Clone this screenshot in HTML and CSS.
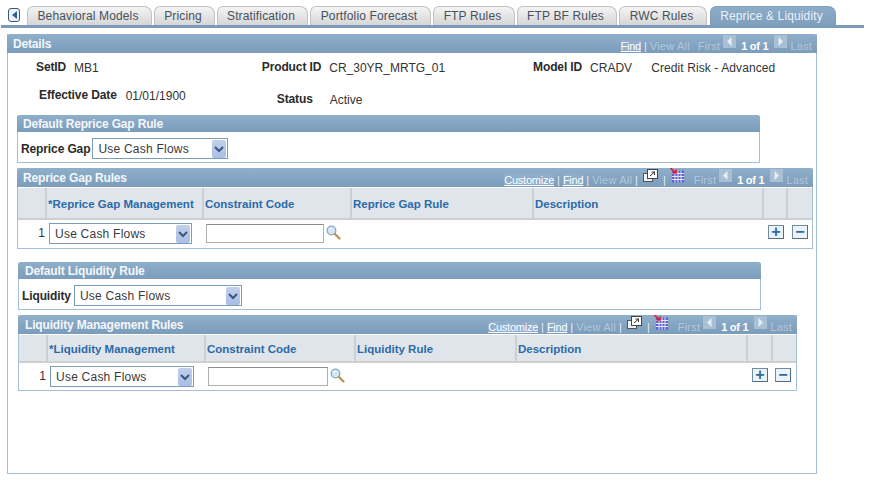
FILE: index.html
```html
<!DOCTYPE html>
<html>
<head>
	<meta charset="UTF-8">
	<title>Reprice &amp; Liquidity</title>
	<link rel="stylesheet" href="styles.css">
</head>
<body>
	<svg class="defs" width="0" height="0">
		<symbol id="zoom" viewBox="0 0 15 15">
			<circle cx="5.500" cy="5.500" r="4.300" fill="#d6e6f5" stroke="#86a8c8" stroke-width="1.300"/>
			<path d="M3.500 4.500c.6-1 1.400-1.500 2.500-1.500" fill="none" stroke="#fff" stroke-width="1.200"/>
			<path d="M9 9l4.500 4.500" stroke="#b8924f" stroke-width="2.200" stroke-linecap="round"/>
		</symbol>
		<symbol id="arrow" viewBox="0 0 14 18">
			<path d="M3 7l4 4 4-4" fill="none" stroke="#3b5680" stroke-width="2"/>
		</symbol>
		<symbol id="popup" viewBox="0 0 15 13">
			<rect x=".5" y="4.500" width="9" height="8" fill="#eef3f7" stroke="#555"/>
			<rect x="4.500" y=".5" width="10" height="9" fill="#fff" stroke="#444"/>
			<path d="M7 7l4.500-4M8.500 3h3v3" fill="none" stroke="#333"/>
		</symbol>
		<symbol id="sheet" viewBox="0 0 14 15">
			<rect x="1.500" y="2.500" width="12" height="12" fill="#5f5fd0"/>
			<path d="M1.500 5.500h12M1.500 8.500h12M1.500 11.500h12M4.500 2.500v12M7.500 2.500v12M10.500 2.500v12" stroke="#e4e6fa"/>
			<path d="M0 0l5.500 5M2 5h3.500V1.500" fill="none" stroke="#d8232a" stroke-width="1.600"/>
		</symbol>
		<symbol id="prev" viewBox="0 0 13 13">
			<rect width="13" height="13" fill="#a9c0d4"/>
			<path d="M8.500 2v9L4 6.500z" fill="#e6eef5"/>
		</symbol>
		<symbol id="next" viewBox="0 0 13 13">
			<rect width="13" height="13" fill="#a9c0d4"/>
			<path d="M4.500 2v9L9 6.500z" fill="#e6eef5"/>
		</symbol>
	</svg>

	<div class="tabs">
		<a class="back"><i></i></a>
		<a class="tab w1">Behavioral Models</a>
		<a class="tab w2">Pricing</a>
		<a class="tab w3">Stratification</a>
		<a class="tab w4">Portfolio Forecast</a>
		<a class="tab w5">FTP Rules</a>
		<a class="tab w6">FTP BF Rules</a>
		<a class="tab w7">RWC Rules</a>
		<a class="tab active">Reprice &amp; Liquidity</a>
	</div>
	<div class="tabbar"></div>

	<div class="details">
		<div class="title">
			<span>Details</span>
			<div class="nav">
				<a>Find</a><b class="sep">|</b><em>View All</em><em class="first">First</em>
				<svg class="step"><use href="#prev"/></svg><strong>1 of 1</strong><svg class="step"><use href="#next"/></svg><em>Last</em>
			</div>
		</div>

		<div class="fields row1">
			<label>SetID</label><span class="val mb1">MB1</span>
			<label>Product ID</label><span class="val cr">CR_30YR_MRTG_01</span>
			<label>Model ID</label><span class="val cradv">CRADV</span><span class="val descr">Credit Risk - Advanced</span>
		</div>
		<div class="fields row2">
			<label>Effective Date</label><span class="val date">01/01/1900</span>
			<label class="status">Status</label><span class="val active-val">Active</span>
		</div>

		<div class="box box-gap">
			<div class="title small">Default Reprice Gap Rule</div>
			<div class="pick">
				<label>Reprice Gap</label>
				<div class="select sel-gap">Use Cash Flows<span class="drop"><svg><use href="#arrow"/></svg></span></div>
			</div>
		</div>

		<div class="grid grid-gap">
			<div class="title small">
				<span>Reprice Gap Rules</span>
				<div class="nav">
					<a>Customize</a><b class="sep">|</b><a>Find</a><b class="sep">|</b><em>View All</em><b class="sep">|</b>
					<svg class="ico"><use href="#popup"/></svg><b class="sep">|</b><svg class="ico sheet"><use href="#sheet"/></svg><em class="first">First</em>
					<svg class="step"><use href="#prev"/></svg><strong>1 of 1</strong><svg class="step"><use href="#next"/></svg><em>Last</em>
				</div>
			</div>
			<div class="head">
				<div class="c0"></div>
				<div class="c1">*Reprice Gap Management</div>
				<div class="c2">Constraint Code</div>
				<div class="c3">Reprice Gap Rule</div>
				<div class="c4">Description</div>
				<div class="c5"></div>
				<div class="c6"></div>
			</div>
			<div class="line">
				<div class="c0 num">1</div>
				<div class="c1"><div class="select sel-row">Use Cash Flows<span class="drop"><svg><use href="#arrow"/></svg></span></div></div>
				<div class="c2 code"><div class="input"></div><svg class="lens"><use href="#zoom"/></svg></div>
				<div class="c3"></div>
				<div class="c4"></div>
				<div class="c5"><span class="btn">+</span></div>
				<div class="c6"><span class="btn">&minus;</span></div>
			</div>
		</div>

		<div class="box box-liq">
			<div class="title small">Default Liquidity Rule</div>
			<div class="pick">
				<label>Liquidity</label>
				<div class="select sel-liq">Use Cash Flows<span class="drop"><svg><use href="#arrow"/></svg></span></div>
			</div>
		</div>

		<div class="grid grid-liq">
			<div class="title small">
				<span>Liquidity Management Rules</span>
				<div class="nav">
					<a>Customize</a><b class="sep">|</b><a>Find</a><b class="sep">|</b><em>View All</em><b class="sep">|</b>
					<svg class="ico"><use href="#popup"/></svg><b class="sep">|</b><svg class="ico sheet"><use href="#sheet"/></svg><em class="first">First</em>
					<svg class="step"><use href="#prev"/></svg><strong>1 of 1</strong><svg class="step"><use href="#next"/></svg><em>Last</em>
				</div>
			</div>
			<div class="head">
				<div class="c0"></div>
				<div class="c1">*Liquidity Management</div>
				<div class="c2">Constraint Code</div>
				<div class="c3">Liquidity Rule</div>
				<div class="c4">Description</div>
				<div class="c5"></div>
				<div class="c6"></div>
			</div>
			<div class="line">
				<div class="c0 num">1</div>
				<div class="c1"><div class="select sel-row2">Use Cash Flows<span class="drop"><svg><use href="#arrow"/></svg></span></div></div>
				<div class="c2 code"><div class="input wide"></div><svg class="lens"><use href="#zoom"/></svg></div>
				<div class="c3"></div>
				<div class="c4"></div>
				<div class="c5"><span class="btn">+</span></div>
				<div class="c6"><span class="btn">&minus;</span></div>
			</div>
		</div>
	</div>
</body>
</html>
```

FILE: styles.css
```css
* {
    box-sizing: border-box;
}
html, body {
    margin: 0;
    background: #fff;
}
body {
    width: 875px;
    height: 490px;
    overflow: hidden;
    font-family: "Liberation Sans", Arial, sans-serif;
    font-size: 12px;
    color: #333;
}
.defs {
    display: block;
    height: 0;
}

/* tabs */
.tabs {
    display: flex;
    align-items: flex-end;
    height: 25px;
    padding-left: 8px;
    gap: 2px;
}
.back {
    width: 12px;
    height: 14px;
    margin: 0 5px 3px 0;
    border: 1px solid #40566c;
    border-radius: 3px;
    background: #eef3f8;
    display: flex;
    align-items: center;
    justify-content: center;
}
.back i {
    border: 4px solid transparent;
    border-right: 5px solid #2f5f9f;
    border-left: 0;
}
.tab {
    height: 19px;
    padding-right: 3px;
    line-height: 18px;
    text-align: center;
    border: 1px solid #c2c2c2;
    border-bottom: 0;
    border-radius: 6px 8px 0 0;
    background: linear-gradient(#f4f4f4, #d6d6d6);
    color: #46525e;
    letter-spacing: .14px;
}
.w1 { width: 125px; }
.w2 { width: 61px; }
.w3 { width: 91px; }
.w4 { width: 121px; }
.w5 { width: 82px; }
.w6 { width: 100px; }
.w7 { width: 88px; }
.tab.active {
    width: 126px;
    margin-left: 1px;
    border-color: #7f9fbd;
    background: linear-gradient(#8cacc8, #7f9fbd);
    color: #eaf1f7;
}
.tabbar {
    height: 3px;
    margin: 0 11px 6px 1px;
    background: #7a9bba;
}

/* panels */
.details {
    width: 810px;
    height: 440px;
    margin-left: 7px;
    border: 1px solid #a3bfda;
    border-top: 0;
}
.title {
    display: flex;
    justify-content: space-between;
    align-items: center;
    height: 19px;
    margin: 0 -1px;
    padding: 0 5px 0 6px;
    border-radius: 3px 3px 0 0;
    background: linear-gradient(#8fafca, #7b9cbb);
    color: #f4f7fa;
    font-weight: bold;
    letter-spacing: -.17px;
}
.title.small {
    height: 17px;
}
.grid .title.small {
    height: 19px;
}
.nav {
    display: flex;
    align-items: center;
    gap: 3px;
    padding-top: 4px;
    font-size: 11px;
    font-weight: normal;
    letter-spacing: 0;
    color: #fff;
}
.nav a {
    letter-spacing: -.25px;
    text-decoration: underline;
    background: #90aecb;
}
.nav em {
    font-style: normal;
    letter-spacing: .2px;
    color: #b3c7d9;
}
.nav strong {
    margin: 0 3px 0 2px;
    letter-spacing: -.25px;
    color: #fff;
}
.nav .first {
    margin-left: 5px;
}
.sep {
    font-weight: normal;
    color: #e8eef4;
}
.step {
    width: 13px;
    height: 13px;
    margin-top: -8px;
}
.ico {
    width: 15px;
    height: 13px;
    margin: -8px 2px 0;
}
.ico.sheet {
    height: 15px;
    margin: -9px 1px 0;
}

/* details fields */
.fields {
    display: flex;
    align-items: flex-start;
}
.fields label {
    font-weight: bold;
    letter-spacing: -.12px;
    color: #2b2b2b;
}
.val {
    margin-top: 1px;
    color: #333;
}
.row1 {
    height: 24px;
    padding: 7px 0 0 28px;
}
.mb1 { margin: 1px 163px 0 8px; }
.cr { margin: 1px 88px 0 8px; }
.cradv { margin: 1px 19px 0 8px; }
.descr { letter-spacing: .1px; }
.row2 {
    height: 38px;
    padding: 11px 0 0 31px;
}
.date { margin: 1px 91px 0 9px; }
.status { margin-top: 4px; }
.active-val { margin: 5px 0 0 17px; }

.box {
    border: 1px solid #a3bfda;
    border-top: 0;
    border-radius: 3px 3px 0 0;
}
.box-gap {
    width: 743px;
    height: 48px;
    margin: 0 0 5px 9px;
}
.box-liq {
    width: 743px;
    height: 48px;
    margin: 0 0 5px 10px;
}
.box-liq .title, .grid-liq .title {
    padding-left: 7px;
}
.pick {
    display: flex;
    align-items: center;
    gap: 2px;
    height: 31px;
    padding: 2px 0 0 3px;
}
.pick label {
    font-weight: bold;
    letter-spacing: -.12px;
    color: #2b2b2b;
}
.box-liq .pick {
    gap: 3px;
}

/* dropdowns */
.select {
    position: relative;
    display: flex;
    align-items: center;
    height: 21px;
    padding-left: 5px;
    border: 1px solid #7b9cbb;
    background: #fff;
    color: #3a3a3a;
    letter-spacing: .23px;
}
.sel-gap { width: 136px; }
.sel-liq { width: 168px; }
.sel-row { width: 143px; }
.sel-row2 { width: 144px; }
.drop {
    position: absolute;
    top: 1px;
    right: 1px;
    width: 14px;
    height: 18px;
    border-radius: 2px;
    background: linear-gradient(#c0d0ec, #a9bfe4);
}
.drop svg {
    display: block;
    width: 14px;
    height: 18px;
}

/* grids */
.grid {
    height: 81px;
    border: 1px solid #a3bfda;
    border-top: 0;
}
.grid-gap {
    width: 796px;
    margin: 0 0 13px 9px;
}
.grid-liq {
    width: 779px;
    height: 76px;
    margin-left: 10px;
}
.head, .line {
    display: flex;
}
.head {
    height: 32px;
    margin-top: 1px;
    background: #dfe5eb;
    border-bottom: 2px solid #cfcfcf;
    align-items: stretch;
    color: #2c6aa8;
    font-weight: bold;
    font-size: 11.500px;
}
.head > div {
    display: flex;
    align-items: center;
    padding: 2px 0 0 1px;
    border-right: 2px solid #cdcfd0;
}
.head > div:last-child {
    border-right: 0;
}
.grid-liq .head {
    height: 28px;
}
.c0 { width: 29px; flex: none; }
.c1 { width: 157px; flex: none; }
.c2 { width: 148px; flex: none; }
.c3 { width: 182px; flex: none; }
.c4 { width: 230px; flex: none; }
.c5 { width: 24px; flex: none; }
.c6 { width: 24px; flex: none; }
.grid-liq .c0 { width: 29px; }
.grid-liq .c1 { width: 158px; }
.grid-liq .c2 { width: 150px; }
.grid-liq .c3 { width: 161px; }
.grid-liq .c4 { width: 231px; }
.grid-liq .c5 { width: 25px; }
.grid-liq .c6 { width: 24px; }
.line {
    height: 28px;
    padding-top: 3px;
}
.line .c1 {
    padding-left: 2px;
}
.num {
    padding: 3px 2px 0 0;
    text-align: right;
}
.code {
    display: flex;
    align-items: flex-start;
    padding: 1px 0 0 2px;
    gap: 2px;
}
.input {
    width: 118px;
    height: 19px;
    border: 1px solid #b0b0b0;
    border-top-color: #8c8c8c;
    background: #fff;
}
.input.wide {
    width: 120px;
}
.lens {
    width: 15px;
    height: 15px;
    margin-top: 1px;
}
.line .c5, .line .c6 {
    padding-left: 4px;
}
.grid-liq .line .c6 {
    padding-left: 2px;
}
.btn {
    display: block;
    width: 16px;
    height: 14px;
    margin-top: 2px;
    border: 1px solid #6f8fa8;
    border-right-color: #4e6d86;
    border-bottom-color: #4e6d86;
    background: #edf2f6;
    color: #2c6aa8;
    font-weight: bold;
    font-size: 16px;
    line-height: 11px;
    text-align: center;
}
```
